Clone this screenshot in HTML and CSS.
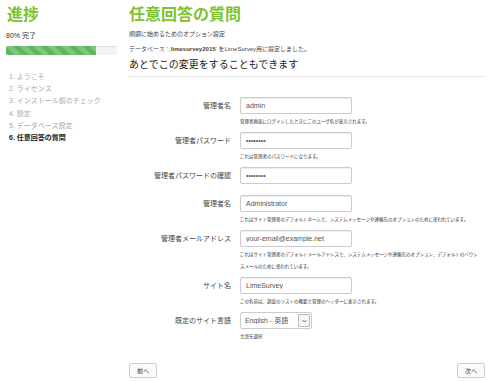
FILE: index.html
```html
<!DOCTYPE html>
<html lang="ja">
<head>
  <meta charset="UTF-8">
  <meta name="viewport" content="width=device-width, initial-scale=1.0">
  <title>任意回答の質問</title>
  <link rel="stylesheet" href="styles.css">
</head>
<body>
  <div class="page">
    <div class="sidebar">
      <h2>進捗</h2>
      <div class="progress-label">80% 完了</div>
      <div class="progress">
        <div class="progress-bar" style="width: 81%"></div>
      </div>
      <ol class="steps">
        <li>1. ようこそ</li>
        <li>2. ライセンス</li>
        <li>3. インストール前のチェック</li>
        <li>4. 設定</li>
        <li>5. データベース設定</li>
        <li class="active">6. 任意回答の質問</li>
      </ol>
    </div>

    <div class="main">
      <h1>任意回答の質問</h1>
      <p class="lead">順調に始めるためのオプション設定</p>
      <p class="lead">データベース '<b>_limesurvey2015</b>' をLimeSurvey用に設定しました。</p>
      <h3>あとでこの変更をすることもできます</h3>

      <form class="form">
        <div class="group">
          <label>管理者名</label>
          <div class="field">
            <input type="text" class="input" value="admin">
            <div class="help">管理者画面にログインしたときにこのユーザ名が表示されます。</div>
          </div>
        </div>
        <div class="group">
          <label>管理者パスワード</label>
          <div class="field">
            <input type="password" class="input" value="password">
            <div class="help">これは管理者のパスワードになります。</div>
          </div>
        </div>
        <div class="group">
          <label>管理者パスワードの確認</label>
          <div class="field">
            <input type="password" class="input" value="password">
          </div>
        </div>
        <div class="group">
          <label>管理者名</label>
          <div class="field">
            <input type="text" class="input" value="Administrator">
            <div class="help">これはサイト管理者のデフォルトネームで、システムメッセージや連絡先のオプションのために使われています。</div>
          </div>
        </div>
        <div class="group">
          <label>管理者メールアドレス</label>
          <div class="field">
            <input type="text" class="input" value="your-email@example.net">
            <div class="help">これはサイト管理者のデフォルトメールアドレスで、システムメッセージや連絡先のオプション、デフォルトのバウンスメールのために使われています。</div>
          </div>
        </div>
        <div class="group">
          <label>サイト名</label>
          <div class="field">
            <input type="text" class="input" value="LimeSurvey">
            <div class="help">この名前は、調査のリストの概要と管理のヘッダーに表示されます。</div>
          </div>
        </div>
        <div class="group">
          <label>既定のサイト言語</label>
          <div class="field">
            <div class="select-box">
              <select class="select">
                <option>English - 英語</option>
              </select>
              <span class="select-arrow">
                <svg width="5" height="4" viewBox="0 0 5 4"><path d="M0.5 1 L2.5 3 L4.5 1" fill="none" stroke="#666" stroke-width="1"/></svg>
              </span>
            </div>
            <div class="help">言語を選択</div>
          </div>
        </div>
      </form>

      <div class="actions">
        <button class="btn">前へ</button>
        <button class="btn">次へ</button>
      </div>
    </div>
  </div>
</body>
</html>
```

FILE: styles.css
```css
body {
  margin: 0;
  font-family: 'Liberation Sans', 'Noto Sans CJK JP', sans-serif;
  color: #333;
  background-color: #fff;
}

.page {
  display: flex;
}

.sidebar {
  width: 111px;
  padding-left: 6px;
}

.sidebar h2 {
  margin: 7px 0 0 1px;
  font-size: 16px;
  line-height: 16px;
  color: #7dc22d;
}

.progress-label {
  margin-top: 9px;
  font-size: 7px;
  line-height: 8px;
}

.progress {
  margin-top: 6px;
  height: 9px;
  background-color: #f3f3f3;
  border-radius: 2px;
  box-shadow: inset 0 1px 1px rgba(0, 0, 0, 0.08);
  overflow: hidden;
}

.progress-bar {
  height: 100%;
  background-color: #5cb85c;
  background-image: linear-gradient(45deg, rgba(255, 255, 255, 0.2) 25%, transparent 25%, transparent 50%, rgba(255, 255, 255, 0.2) 50%, rgba(255, 255, 255, 0.2) 75%, transparent 75%, transparent);
  background-size: 14px 14px;
}

.steps {
  list-style: none;
  margin: 16px 0 0;
  padding: 0 0 0 3px;
  font-size: 7px;
  line-height: 12.2px;
  color: #aaa;
}

.steps .active {
  color: #222;
  font-weight: bold;
}

.main {
  width: 356px;
  margin-left: 12px;
}

.main h1 {
  margin: 7px 0 0;
  font-size: 16px;
  line-height: 16px;
  color: #7dc22d;
}

.lead {
  margin: 8px 0 0;
  font-size: 6px;
  line-height: 7px;
  color: #444;
}

.main h3 {
  margin: 6px 0 0;
  padding-bottom: 5px;
  font-size: 10px;
  font-weight: normal;
  line-height: 12px;
  color: #222;
  border-bottom: 1px solid #e5e5e5;
}

.form {
  margin-top: 20px;
}

.group {
  display: flex;
  margin-bottom: 11px;
}

.group label {
  width: 102px;
  margin-right: 9px;
  text-align: right;
  font-size: 7px;
  line-height: 17px;
  color: #444;
}

.field {
  flex: 1;
}

.input {
  box-sizing: border-box;
  display: block;
  width: 112px;
  height: 17px;
  margin: 0;
  padding: 0 5px;
  font-family: inherit;
  font-size: 7px;
  color: #555;
  border: 1px solid #ccc;
  border-radius: 2px;
  box-shadow: inset 0 1px 1px rgba(0, 0, 0, 0.075);
}

.select-box {
  display: flex;
  width: 72px;
  height: 17px;
  box-sizing: border-box;
  border: 1px solid #ccc;
  border-radius: 2px;
  background-color: #fff;
}

.select {
  flex: 1;
  min-width: 0;
  margin: 0;
  padding: 0 4px;
  font-family: inherit;
  font-size: 7px;
  color: #555;
  border: none;
  background: transparent;
  appearance: none;
  -webkit-appearance: none;
}

.select-arrow {
  display: flex;
  align-items: center;
  justify-content: center;
  width: 10px;
  margin: 1px;
  border: 1px solid #bbb;
  border-radius: 1px;
  background-color: #f7f7f7;
}

.help {
  max-width: 238px;
  margin: 2px 0 -7px;
  font-size: 4.5px;
  line-height: 12px;
  color: #333;
}

.actions {
  display: flex;
  justify-content: space-between;
  margin-top: 27px;
}

.btn {
  width: 28px;
  height: 15px;
  padding: 0;
  font-family: inherit;
  font-size: 6px;
  color: #333;
  background-color: #fafafa;
  border: 1px solid #ccc;
  border-radius: 2px;
  cursor: pointer;
}
```
